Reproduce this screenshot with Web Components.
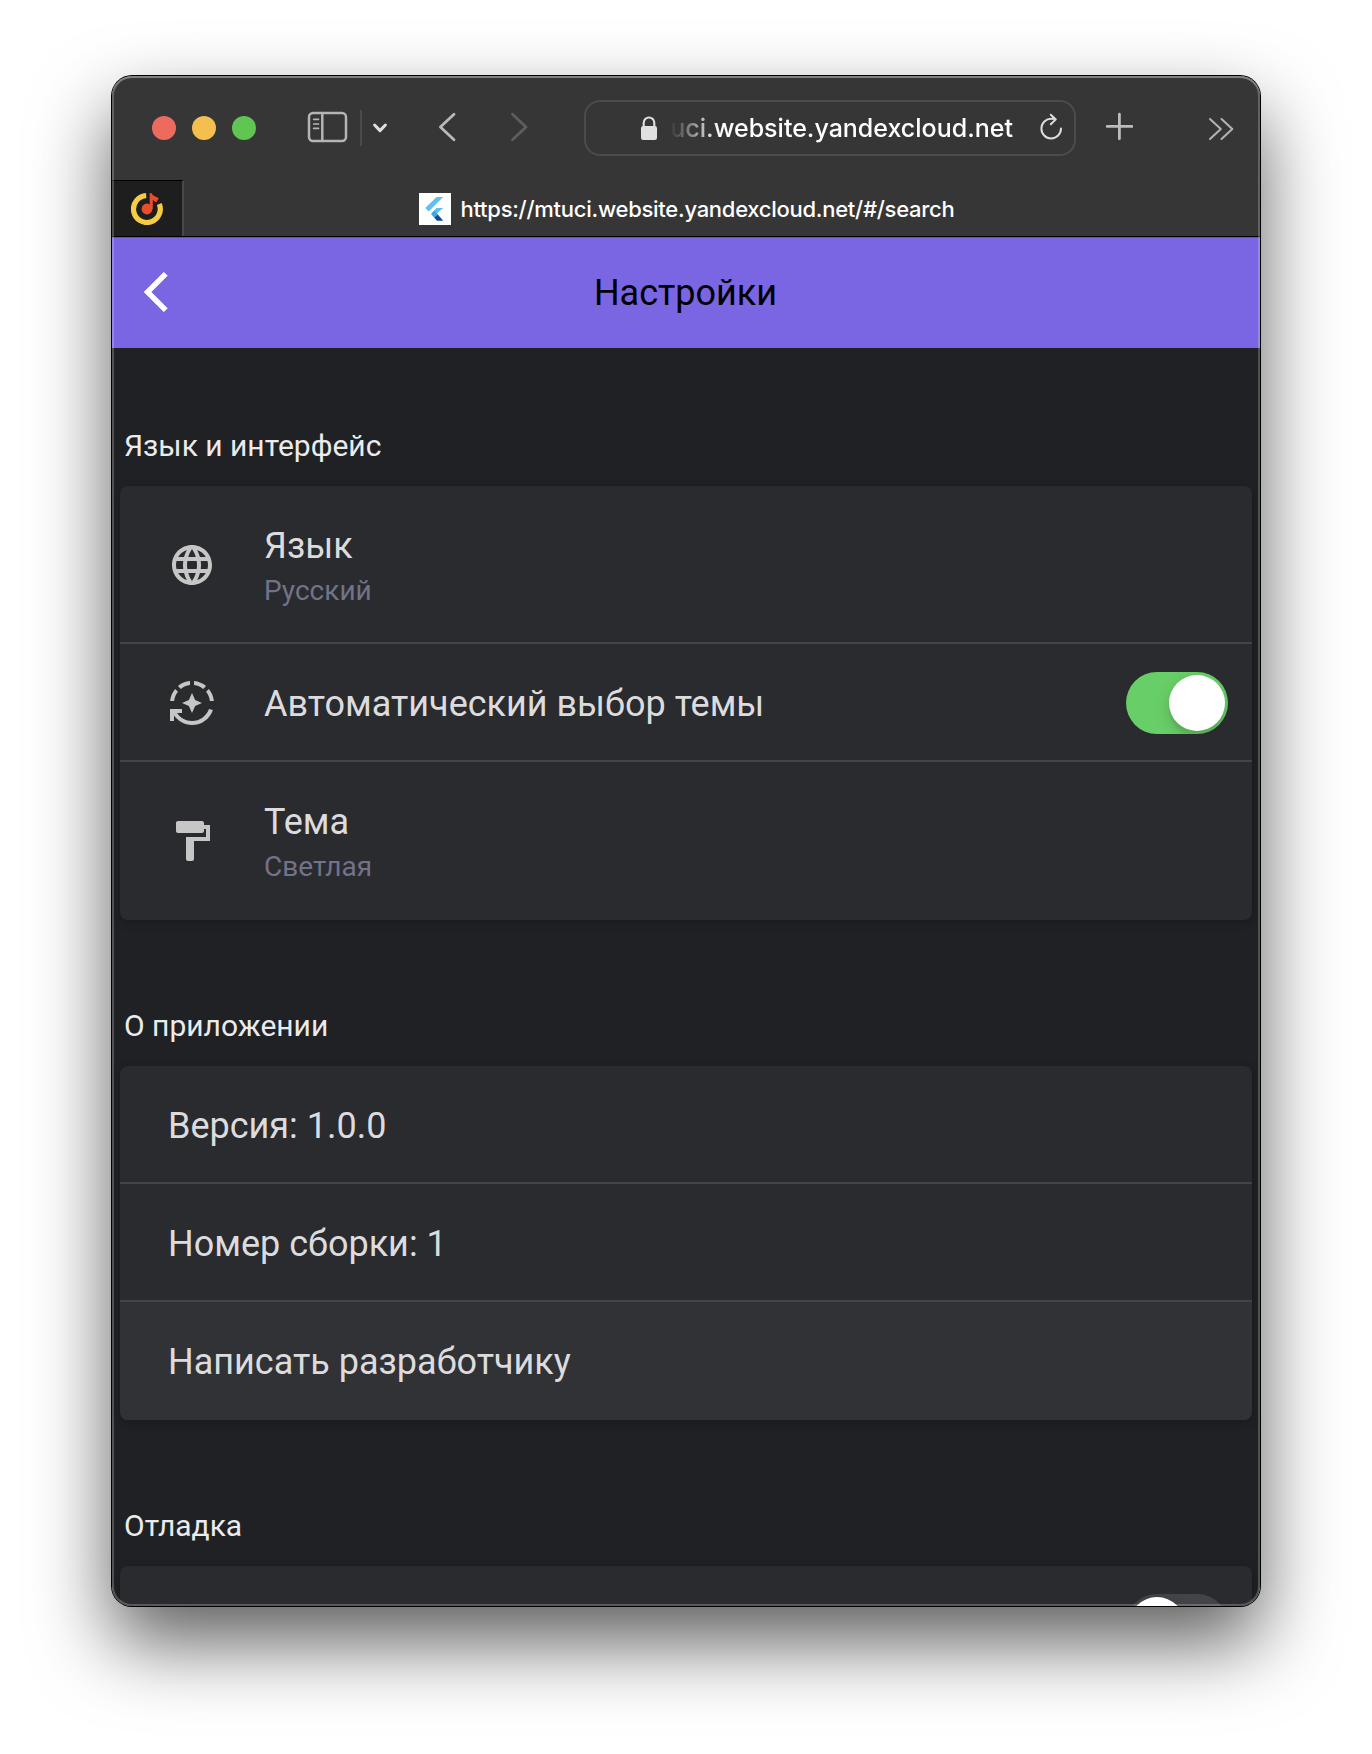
<!DOCTYPE html>
<html lang="ru">
<head>
<meta charset="utf-8">
<title>Настройки</title>
<style>
html,body{margin:0;height:100%;background:#fff;overflow:hidden}
body{font-family:Roboto,"Noto Sans",sans-serif}
</style>
</head>
<body>
<mac-window>
  <browser-toolbar slot="chrome"></browser-toolbar>
  <browser-tabs slot="chrome"></browser-tabs>
  <app-header>Настройки</app-header>
  <settings-section heading="Язык и интерфейс" style="--top:98px">
    <settings-row tall icon="globe">Язык<span slot="sub">Русский</span></settings-row>
    <settings-row icon="auto">Автоматический выбор темы<ios-switch slot="end" on></ios-switch></settings-row>
    <settings-row tall last icon="paint">Тема<span slot="sub">Светлая</span></settings-row>
  </settings-section>
  <settings-section heading="О приложении">
    <settings-row>Версия: 1.0.0</settings-row>
    <settings-row>Номер сборки: 1</settings-row>
    <settings-row last hover>Написать разработчику</settings-row>
  </settings-section>
  <settings-section heading="Отладка">
    <settings-row><ios-switch slot="end"></ios-switch></settings-row>
  </settings-section>
</mac-window>
<script>
const define = (name, html, init) => customElements.define(name, class extends HTMLElement {
  constructor() {
    super();
    this.attachShadow({ mode: 'open' }).innerHTML = html;
  }
  connectedCallback() { if (init) init(this, this.shadowRoot); }
});

define('mac-window', `
<style>
:host{display:block;box-sizing:border-box;height:100%;padding:76px 112px 148px}
.win{position:relative;display:flex;flex-direction:column;height:1530px;border-radius:20px;
  box-shadow:0 0 0 1px #000,0 36px 78px rgba(0,0,0,.64)}
.clip{flex:1;min-height:0;border-radius:20px;overflow:hidden;background:#202124}
.rim{position:absolute;inset:0;border-radius:20px;pointer-events:none;
  box-shadow:inset 0 0 0 2px rgba(255,255,255,.22),inset 0 2px 0 rgba(255,255,255,.2)}
</style>
<div class="win"><div class="clip"><slot name="chrome"></slot><slot></slot></div><div class="rim"></div></div>`);

define('browser-toolbar', `
<style>
:host{display:flex;align-items:flex-start;height:104px;background:#363636;box-sizing:border-box;
  font:500 25px Inter,sans-serif;color:#fff}
svg{display:block;flex:none;fill:none;stroke-linecap:round;stroke-linejoin:round}
.lights{display:flex;gap:16px;padding:40px 0 0 40px}
.lights i{width:24px;height:24px;border-radius:50%}
.side{margin:34px 0 0 51px}
.nav{margin:34px 0 0 48px}
.url{display:flex;box-sizing:border-box;width:492px;height:56px;margin:24px 0 0 55px;border:2px solid #4c4c4c;border-radius:16px}
.lock{margin:14px 0 0 54px}
.addr{flex:1;text-align:right;white-space:nowrap;line-height:53px;
  -webkit-mask:linear-gradient(90deg,transparent 12px,#000 62px);mask:linear-gradient(90deg,transparent 12px,#000 62px)}
.reload{margin:11px 11px 0 26px}
.plus{margin:36px 0 0 29px}
.more{margin:41px 0 0 74px}
</style>
<div class="lights"><i style="background:#ed6a5e"></i><i style="background:#f4bf4f"></i><i style="background:#61c554"></i></div>
<svg class="side" width="82" height="38" viewBox="307 110 82 38">
 <g stroke="#b5b5b5" stroke-width="2.5"><rect x="309" y="113" width="37" height="28" rx="4"/><path d="M322.3 113v28"/><path stroke-width="1.7" d="M313.7 119.3h4.8M313.7 124h4.8M313.7 128.4h4.8"/></g>
 <path stroke="#4a4a4a" stroke-width="2" stroke-linecap="butt" d="M361 110v36"/>
 <path stroke="#dfdfdf" stroke-width="3" d="M374.6 125l5.4 5.6 5.4-5.6"/>
</svg>
<svg class="nav" width="92" height="34" viewBox="437 110 92 34" stroke-width="2.8">
 <path stroke="#b9b9b9" d="M454 114.3L440.4 127l13.6 12.7"/><path stroke="#5e5e5e" d="M512.5 114.3L526 127l-13.5 12.7"/>
</svg>
<div class="url">
 <svg class="lock" width="18" height="25" viewBox="640 116 18 25"><rect x="641" y="126" width="16" height="14" rx="2.2" fill="#e0e0e0"/><path stroke="#e0e0e0" stroke-width="2.1" d="M643.7 127v-4.2a5.3 5.3 0 0 1 10.6 0V127"/></svg>
 <span class="addr">tuci.website.yandexcloud.net</span>
 <svg class="reload" width="24" height="28" viewBox="1039 113 24 28" stroke="#dcdcdc" stroke-width="2"><path d="M1061 128.6a9.8 9.8 0 1 1-9.6-9.8l4 .2M1050.8 114.8l5 4.6-5 4.8"/></svg>
</div>
<svg class="plus" width="28" height="30" viewBox="1105 112 28 30" stroke="#bcbcbc" stroke-width="2.8"><path d="M1107.2 126.4h24.8M1119.4 114.2v24.6"/></svg>
<svg class="more" width="27" height="25" viewBox="1207 117 27 25" stroke="#b2b2b2" stroke-width="2.1"><path d="M1210 119l10.8 10L1210 139M1221.5 119l10.8 10-10.8 10"/></svg>`);

define('browser-tabs', `
<style>
:host{display:flex;height:57px;box-sizing:border-box;border-bottom:1px solid #000;background:#363636;color:#fff}
.pin{box-sizing:border-box;width:72px;border-top:1px solid #000;border-right:2px solid #484848;background:#1e1e1e;padding:12px 0 0 19px}
.tab{flex:1;display:flex;justify-content:center;gap:10px;padding-top:13px;padding-right:71px}
.fav{width:32px;height:32px;background:#fff;flex:none}
svg{display:block}
b{font:500 22px/32px Inter,sans-serif;white-space:nowrap;letter-spacing:-.27px}
</style>
<div class="pin"><svg width="32" height="32" viewBox="0 0 32 32"><path d="M15.2 2.7A13.4 13.4 0 1 0 28.3 11" fill="none" stroke="#f5cd45" stroke-width="5.2"/><circle cx="16" cy="16" r="5.4" fill="#e84e2e"/><path d="M18.7 0h1.6c1 2 3.2 3.3 7.5 5.2l-2.6 4.300-3.400-2.500V16h-3.100z" fill="#e84e2e"/></svg></div>
<div class="tab"><div class="fav"><svg width="32" height="32" viewBox="0 0 32 32"><path d="M17.500 4h6.700L9.700 18.500 6.300 15z" fill="#5cc0f5"/><path d="M17.500 15h6.700l-7.500 6.500-4-1.500z" fill="#5cc0f5"/><path d="M12 21l3.500-3.500 3.500 4-3.500 3.500z" fill="#3aa7e8"/><path d="M15.300 24.700l3.500-3.200 5.400 6.300h-6.200z" fill="#0d4a96"/></svg></div><b>https://mtuci.website.yandexcloud.net/#/search</b></div>`);

define('app-header', `
<style>
:host{display:flex;align-items:center;height:111px;box-sizing:border-box;background:#7a65e2;border-top:1px solid #6253ac;padding:0 32px;color:#000;font-size:36px}
svg{display:block;width:48px;height:48px;fill:#fff;stroke:#fff;stroke-width:.3;margin-bottom:2px}
.t{flex:1;text-align:center;line-height:48px}
.r{width:49px}
</style>
<svg viewBox="0 0 24 24"><path d="M11.67 3.87L9.9 2.1 0 12l9.9 9.9 1.77-1.77L3.54 12z"/></svg><div class="t"><slot></slot></div><div class="r"></div>`);

define('settings-section', `
<style>
:host{display:flex;flex-direction:column;padding:0 8px}
h2{margin:calc(var(--top,106px) - 20px) 0 0;padding:0 4px;height:60px;line-height:40px;font-size:30px;font-weight:400;color:#ebebed;box-sizing:border-box}
.card{border-radius:8px;background:#2a2b2e;box-shadow:0 2px 10px rgba(0,0,0,.25);overflow:hidden}
</style>
<h2></h2><div class="card"><slot></slot></div>`, (el, r) => { r.querySelector('h2').textContent = el.getAttribute('heading'); });

const icons = {
  globe: 'M11.99 2C6.47 2 2 6.48 2 12s4.47 10 9.99 10C17.52 22 22 17.52 22 12S17.52 2 11.99 2zm6.93 6h-2.95c-.32-1.25-.78-2.45-1.38-3.56 1.84.63 3.37 1.91 4.33 3.56zM12 4.04c.83 1.2 1.48 2.53 1.91 3.96h-3.82c.43-1.43 1.08-2.76 1.91-3.96zM4.26 14C4.1 13.36 4 12.69 4 12s.1-1.36.26-2h3.38c-.08.66-.14 1.32-.14 2s.06 1.34.14 2H4.26zm.82 2h2.95c.32 1.25.78 2.45 1.38 3.56-1.84-.63-3.37-1.9-4.33-3.56zm2.95-8H5.08c.96-1.66 2.49-2.93 4.33-3.56C8.81 5.55 8.35 6.75 8.03 8zM12 19.96c-.83-1.2-1.48-2.53-1.91-3.96h3.82c-.43 1.43-1.08 2.76-1.91 3.96zM14.34 14H9.66c-.09-.66-.16-1.32-.16-2s.07-1.35.16-2h4.68c.09.65.16 1.32.16 2s-.07 1.34-.16 2zm.25 5.56c.6-1.11 1.06-2.31 1.38-3.56h2.95c-.96 1.65-2.49 2.93-4.33 3.56zM16.36 14c.08-.66.14-1.32.14-2s-.06-1.34-.14-2h3.38c.16.64.26 1.31.26 2s-.1 1.36-.26 2h-3.38z',
  auto: 'M19.03 3.56c-1.67-1.39-3.74-2.3-6.03-2.51v2.01c1.73.19 3.31.88 4.61 1.92l1.42-1.42zM11 3.06V1.05c-2.29.2-4.36 1.12-6.03 2.51l1.42 1.42C7.69 3.94 9.27 3.25 11 3.06zM4.98 6.39L3.56 4.97C2.17 6.64 1.26 8.71 1.05 11h2.01c.19-1.73.88-3.31 1.92-4.61zM20.94 11h2.01c-.21-2.29-1.12-4.36-2.51-6.03l-1.42 1.42c1.04 1.3 1.73 2.88 1.92 4.61zM7 12l3.44 1.56L12 17l1.56-3.44L17 12l-3.44-1.56L12 7l-1.56 3.44L7 12zM12 21c-3.11 0-5.85-1.59-7.46-4H7v-2H1v6h2v-2.7c1.99 2.84 5.27 4.7 9 4.7 4.87 0 9-3.17 10.44-7.56l-1.96-.45C19.25 18.48 15.92 21 12 21z',
  paint: 'M18 4V3c0-.55-.45-1-1-1H5c-.55 0-1 .45-1 1v4c0 .55.45 1 1 1h12c.55 0 1-.45 1-1V6h1v4H9v11c0 .55.45 1 1 1h2c.55 0 1-.45 1-1v-9h8V4h-3z'
};

define('settings-row', `
<style>
:host{display:flex;align-items:center;box-sizing:border-box;height:118px;padding:2px 24px 0 48px;border-bottom:2px solid #434447}
:host([tall]){height:158px}
:host([last]){border-bottom:none;padding-bottom:2px}
:host([hover]){background:#313235}
svg{display:none;width:48px;height:48px;margin-right:48px;fill:#c6c6c6;flex:none}
:host([icon]) svg{display:block}
.body{flex:1;display:flex;flex-direction:column;padding-top:2px}
.t{font-size:36px;line-height:44px;color:#dcdcde;white-space:nowrap}
.s{display:none;font-size:28px;line-height:36px;color:#727289;padding-top:5px}
:host([tall]) .s{display:block}
:host([tall]) .body{padding-top:3px}
</style>
<svg viewBox="0 0 24 24"><path/></svg>
<div class="body"><div class="t"><slot></slot></div><div class="s"><slot name="sub"></slot></div></div>
<slot name="end"></slot>`, (el, r) => {
  const d = icons[el.getAttribute('icon')];
  if (d) r.querySelector('path').setAttribute('d', d);
});

define('ios-switch', `
<style>
:host{display:flex;box-sizing:border-box;width:102px;height:62px;padding:3px;border-radius:31px;background:#434348;overflow:hidden}
:host([on]){background:#68ce67;justify-content:flex-end}
i{width:56px;height:56px;border-radius:50%;background:#fff;box-shadow:0 6px 16px rgba(0,0,0,.15),0 6px 2px rgba(0,0,0,.06)}
</style><i></i>`);
</script>
</body>
</html>
